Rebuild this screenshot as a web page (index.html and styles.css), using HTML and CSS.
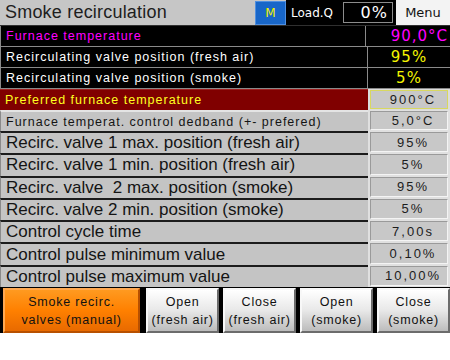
FILE: index.html
```html
<!DOCTYPE html>
<html lang="en">
<head>
    <meta charset="UTF-8">
    <meta name="viewport" content="width=device-width, initial-scale=1.0">
    <title>Smoke recirculation</title>
    <link rel="stylesheet" href="styles.css">
</head>
<body>
    <div class="screen">
        <div class="topbar">
            <div class="title">Smoke recirculation</div>
            <div class="mode">M</div>
            <div class="load">
                <span>Load.Q</span>
                <span class="load-value">0%</span>
            </div>
            <button class="menu">Menu</button>
        </div>

        <!-- Живі значення -->
        <div class="block block-top">
            <div class="row live">
                <div class="label pink">Furnace temperature</div>
                <div class="value pink big right">90,0°C</div>
            </div>
            <div class="row live">
                <div class="label">Recirculating valve position (fresh air)</div>
                <div class="value yellow big">95%</div>
            </div>
            <div class="row live">
                <div class="label">Recirculating valve position (smoke)</div>
                <div class="value yellow big">5%</div>
            </div>
            <div class="row selected">
                <div class="label">Preferred furnace temperature</div>
                <div class="value"><span class="box">900°C</span></div>
            </div>
            <div class="row param first">
                <div class="label">Furnace temperat. control dedband (+- prefered)</div>
                <div class="value"><span class="box">5,0°C</span></div>
            </div>
        </div>

        <!-- Параметри -->
        <div class="block block-bottom">
            <div class="row param large">
                <div class="label">Recirc. valve 1 max. position (fresh air)</div>
                <div class="value"><span class="box">95%</span></div>
            </div>
            <div class="row param large">
                <div class="label">Recirc. valve 1 min. position (fresh air)</div>
                <div class="value"><span class="box">5%</span></div>
            </div>
            <div class="row param large">
                <div class="label">Recirc. valve&nbsp; 2 max. position (smoke)</div>
                <div class="value"><span class="box">95%</span></div>
            </div>
            <div class="row param large">
                <div class="label">Recirc. valve 2 min. position (smoke)</div>
                <div class="value"><span class="box">5%</span></div>
            </div>
            <div class="row param large">
                <div class="label">Control cycle time</div>
                <div class="value"><span class="box">7,00s</span></div>
            </div>
            <div class="row param large">
                <div class="label">Control pulse minimum value</div>
                <div class="value"><span class="box">0,10%</span></div>
            </div>
            <div class="row param large">
                <div class="label">Control pulse maximum value</div>
                <div class="value"><span class="box">10,00%</span></div>
            </div>
        </div>

        <div class="actions">
            <button class="btn btn-orange">Smoke recirc.<br>valves (manual)</button>
            <button class="btn">Open<br>(fresh air)</button>
            <button class="btn">Close<br>(fresh air)</button>
            <button class="btn">Open<br>(smoke)</button>
            <button class="btn">Close<br>(smoke)</button>
        </div>
    </div>
</body>
</html>
```

FILE: styles.css
```css
/* Загальні стилі */
body {
    margin: 0;
    background: #fff;
    font-family: 'Liberation Sans', Arial, sans-serif;
}

.screen {
    width: 450px;
}

/* Верхня панель */
.topbar {
    display: flex;
    height: 25px;
    background: #c6c6c6;
    border-bottom: 1px solid #303030;
}

.title {
    flex: 1;
    padding-left: 5px;
    font-size: 18px;
    line-height: 25px;
    letter-spacing: 0.2px;
    color: #1e1e1e;
}

.mode {
    width: 29px;
    height: 22px;
    margin-top: 1px;
    background: #1866c8;
    border: 1px solid #4f8fe0;
    color: #f2f200;
    font-family: 'DejaVu Sans', sans-serif;
    font-size: 12px;
    line-height: 22px;
    text-align: center;
}

.load {
    display: flex;
    align-items: center;
    width: 102px;
    padding: 0 3px 0 5px;
    background: #000;
    color: #fff;
    font-family: 'DejaVu Sans', sans-serif;
    font-size: 12px;
}

.load-value {
    margin-left: auto;
    width: 44px;
    height: 19px;
    padding-right: 4px;
    border: 1px solid #8c8c8c;
    text-align: right;
    font-size: 16px;
    line-height: 19px;
    letter-spacing: 1px;
}

.menu {
    width: 54px;
    padding: 0;
    border: none;
    background: #f3f3f3;
    font-family: 'DejaVu Sans', sans-serif;
    font-size: 13px;
    color: #111;
}

/* Таблиця */
.block {
    display: flex;
    flex-direction: column;
}

.block-top {
    height: 105px;
}

.block-bottom {
    height: 156px;
}

.row {
    flex: 1;
    display: flex;
    min-height: 0;
}

.label {
    flex: 1;
    display: flex;
    align-items: center;
    padding-left: 5px;
    font-size: 12.5px;
    letter-spacing: 1px;
    white-space: nowrap;
    overflow: hidden;
}

.value {
    width: 82px;
    display: flex;
    align-items: center;
    justify-content: center;
    font-size: 13px;
    letter-spacing: 2px;
}

/* Чорні рядки */
.live {
    background: #000;
    color: #fff;
}

.live .label {
    border-left: 1px solid #8a8a8a;
    border-bottom: 1px solid #8a8a8a;
}

.live .value {
    border-left: 1px solid #8a8a8a;
    border-bottom: 1px solid #8a8a8a;
}

.pink {
    color: #ff00ff;
}

.yellow {
    color: #f4f400;
}

.big {
    font-family: 'DejaVu Sans', sans-serif;
    font-size: 15px;
    letter-spacing: 1px;
}

.right {
    justify-content: flex-end;
    padding-right: 2px;
}

/* Вибраний рядок */
.selected .label {
    background: #800000;
    color: #ffff20;
    border-top: 1px solid #a02020;
}

.selected .value {
    background: #dcdcdc;
}

.selected .box {
    border-color: #d8d860;
}

/* Параметри */
.param .label {
    background: #c4c4c4;
    color: #141414;
    border-top: 2px solid #1c1c1c;
    border-left: 1px solid #8a8a8a;
}

.param.first .label {
    border-top-color: #e4e4e4;
}

.param .value {
    background: #e0e0e0;
}

.box {
    box-sizing: border-box;
    width: 78px;
    height: calc(100% - 2px);
    display: flex;
    align-items: center;
    justify-content: center;
    padding-left: 8px;
    background: #c8c8c8;
    border: 1px solid;
    border-color: #9a9a9a #f4f4f4 #f4f4f4 #9a9a9a;
    color: #1c1c1c;
}

.large .label {
    font-size: 17px;
    letter-spacing: 0;
}

/* Кнопки */
.actions {
    display: flex;
    gap: 4px;
    height: 46px;
    padding: 1px 0 0 3px;
    box-sizing: border-box;
    background: #000;
}

.btn {
    flex: 72;
    padding: 0;
    border: 2px solid;
    border-color: #f8f8f8 #6c6c6c #6c6c6c #f8f8f8;
    background: linear-gradient(#ffffff, #e8e8e8 50%, #bcbcbc);
    font-family: 'Liberation Sans', Arial, sans-serif;
    font-size: 12.5px;
    letter-spacing: 0.8px;
    line-height: 18px;
    white-space: nowrap;
    color: #111;
}

.btn-orange {
    flex: 139;
    margin-right: 2px;
    border-color: #ffa850 #b85000 #b85000 #ffa850;
    background: linear-gradient(#ff9a20, #ff8000 50%, #e86a00);
}
```
